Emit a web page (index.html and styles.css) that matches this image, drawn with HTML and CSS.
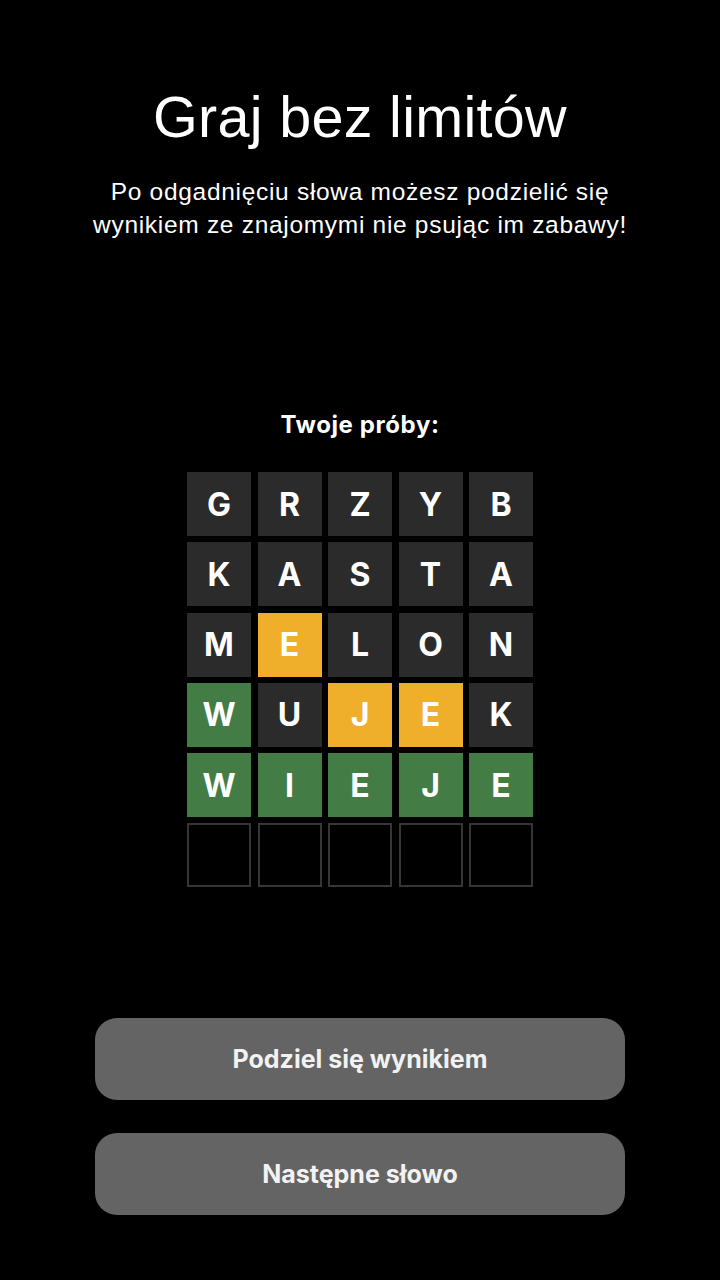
FILE: index.html
```html
<!DOCTYPE html>
<html lang="pl">
<head>
<meta charset="utf-8">
<link rel="stylesheet" href="styles.css">
</head>
<body>
<main class="screen">
  <header class="intro">
    <h1 class="title">Graj bez limitów</h1>
    <p class="subtitle">Po odgadnięciu słowa możesz podzielić się<br>wynikiem ze znajomymi nie psując im zabawy!</p>
  </header>
  <section class="attempts">
    <h2 class="attempts-label">Twoje próby:</h2>
    <div class="grid">
      <div class="tile">G</div><div class="tile">R</div><div class="tile">Z</div><div class="tile">Y</div><div class="tile">B</div>
      <div class="tile">K</div><div class="tile">A</div><div class="tile">S</div><div class="tile">T</div><div class="tile">A</div>
      <div class="tile">M</div><div class="tile present">E</div><div class="tile">L</div><div class="tile">O</div><div class="tile">N</div>
      <div class="tile correct">W</div><div class="tile">U</div><div class="tile present">J</div><div class="tile present">E</div><div class="tile">K</div>
      <div class="tile correct">W</div><div class="tile correct">I</div><div class="tile correct">E</div><div class="tile correct">J</div><div class="tile correct">E</div>
      <div class="tile empty"></div><div class="tile empty"></div><div class="tile empty"></div><div class="tile empty"></div><div class="tile empty"></div>
    </div>
  </section>
  <div class="actions">
    <button class="btn">Podziel się wynikiem</button>
    <button class="btn">Następne słowo</button>
  </div>
</main>
</body>
</html>
```
FILE: styles.css
```css
html, body {
  margin: 0;
  padding: 0;
  background: #000;
}
body {
  font-family: "Liberation Sans", Arial, sans-serif;
  color: #fff;
}
.screen {
  width: 720px;
  height: 1280px;
  display: flex;
  flex-direction: column;
  align-items: center;
  box-sizing: border-box;
}
.intro {
  display: flex;
  flex-direction: column;
  align-items: center;
  padding-top: 82px;
}
.title {
  margin: 0;
  font-size: 57.5px;
  font-weight: 400;
  line-height: 70px;
  letter-spacing: 0.3px;
}
.subtitle {
  margin: 23px 0 0;
  font-size: 24.5px;
  line-height: 33px;
  letter-spacing: 0.7px;
  text-align: center;
}
.attempts {
  margin-top: 168px;
  display: flex;
  flex-direction: column;
  align-items: center;
}
.attempts-label {
  margin: 0;
  font-size: 24px;
  font-weight: 700;
  line-height: 32px;
  letter-spacing: 0.6px;
  font-family: "Inter", "Liberation Sans", sans-serif;
}
.grid {
  margin-top: 31px;
  display: grid;
  grid-template-columns: repeat(5, 64px);
  grid-auto-rows: 64px;
  column-gap: 6.5px;
  row-gap: 6.3px;
}
.tile {
  background: #2b2b2b;
  display: flex;
  align-items: center;
  justify-content: center;
  font-family: "Inter", "Liberation Sans", sans-serif;
  font-weight: 700;
  font-size: 32px;
  color: #fff;
}
.tile.present { background: #f0af2a; }
.tile.correct { background: #437c45; }
.tile.empty {
  background: #000;
  border: 2px solid #363636;
  box-sizing: border-box;
}
.actions {
  margin-top: 131px;
  display: flex;
  flex-direction: column;
  gap: 33px;
}
.btn {
  width: 530px;
  height: 82px;
  border: none;
  border-radius: 22px;
  background: #646464;
  color: #f2f2f2;
  font-family: "Inter", "Liberation Sans", sans-serif;
  font-weight: 700;
  font-size: 25px;
  padding: 0;
}
```
